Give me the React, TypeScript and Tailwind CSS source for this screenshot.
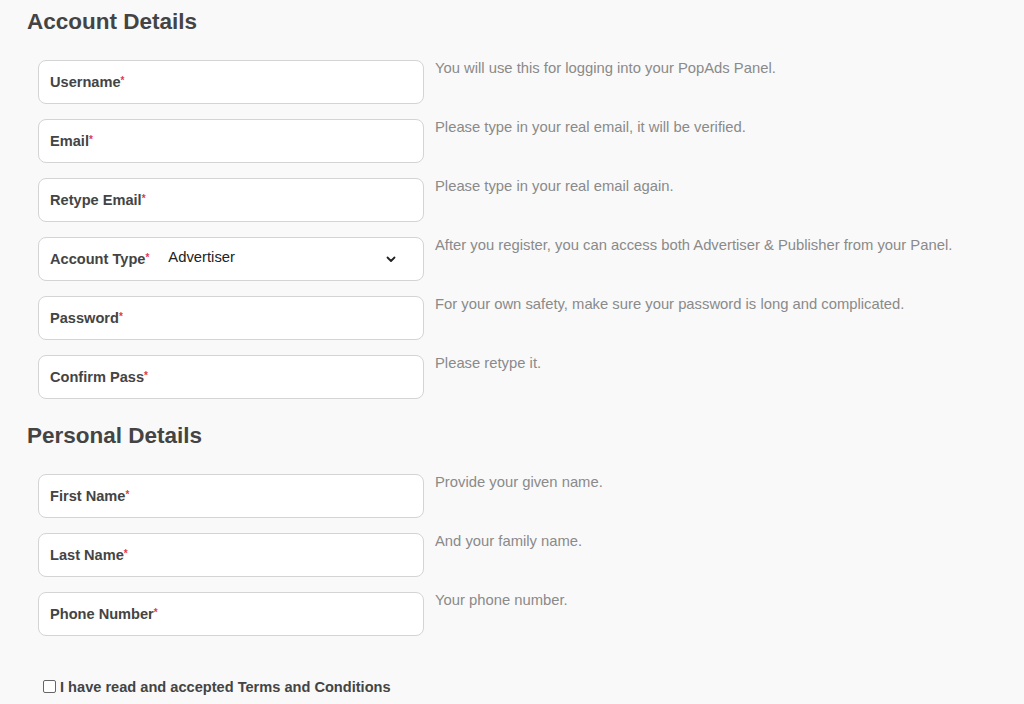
import React from 'react';

type Field = { label: string; hint: string; select?: string };

const account: Field[] = [
  { label: 'Username', hint: 'You will use this for logging into your PopAds Panel.' },
  { label: 'Email', hint: 'Please type in your real email, it will be verified.' },
  { label: 'Retype Email', hint: 'Please type in your real email again.' },
  {
    label: 'Account Type',
    hint: 'After you register, you can access both Advertiser & Publisher from your Panel.',
    select: 'Advertiser',
  },
  { label: 'Password', hint: 'For your own safety, make sure your password is long and complicated.' },
  { label: 'Confirm Pass', hint: 'Please retype it.' },
];

const personal: Field[] = [
  { label: 'First Name', hint: 'Provide your given name.' },
  { label: 'Last Name', hint: 'And your family name.' },
  { label: 'Phone Number', hint: 'Your phone number.' },
];

const Row: React.FC<{ f: Field }> = ({ f }) => (
  <div className="flex">
    <div className="ml-[38px] w-[386px] h-[44px] shrink-0 bg-white border border-[#d4d4d4] rounded-[8px] flex items-center pl-[11px] pr-[26px] pt-[2px]">
      <span className="text-[14.6px] font-bold text-[#444]">
        {f.label}
        <sup className="text-[#e0394a] text-[10px] top-[-0.3em]">*</sup>
      </span>
      {f.select && (
        <>
          <span className="ml-[19px] mb-[5px] text-[14.8px] text-[#222]">{f.select}</span>
          <svg className="ml-auto mb-[2px]" width="12" height="12" viewBox="0 0 12 12" fill="none">
            <path d="M2.5 4.5 6 8l3.5-3.5" stroke="#222" strokeWidth="1.8" strokeLinecap="round" strokeLinejoin="round" />
          </svg>
        </>
      )}
    </div>
    <p className="ml-[11px] text-[14.8px] leading-[16px] text-[#8a8a8a]">{f.hint}</p>
  </div>
);

const App: React.FC = () => {
  return (
    <div
      className="min-h-[704px] w-full bg-[#f9f9f9] pt-[8px] flex flex-col"
      style={{ fontFamily: '"Liberation Sans", Arial, sans-serif' }}
    >
      <h2 className="pl-[27px] text-[22.5px] leading-[28px] font-bold text-[#444] mb-[24px]">Account Details</h2>
      <div className="flex flex-col gap-[15px]">
        {account.map((f) => (
          <Row key={f.label} f={f} />
        ))}
      </div>
      <h2 className="pl-[27px] mt-[23px] text-[22.5px] leading-[28px] font-bold text-[#444] mb-[24px]">
        Personal Details
      </h2>
      <div className="flex flex-col gap-[15px]">
        {personal.map((f) => (
          <Row key={f.label} f={f} />
        ))}
      </div>
      <label className="flex items-center gap-[4px] ml-[43px] mt-[41px] text-[14.6px] font-bold text-[#444]">
        <span className="w-[13px] h-[13px] mb-[3px] border border-[#666] rounded-[2px] bg-white" />
        I have read and accepted Terms and Conditions
      </label>
    </div>
  );
};

export default App;
